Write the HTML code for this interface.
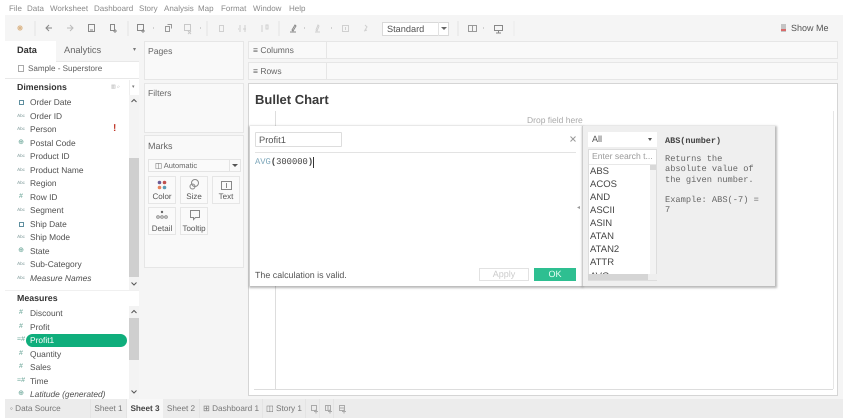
<!DOCTYPE html>
<html><head><meta charset="utf-8">
<style>
html,body{margin:0;padding:0;background:#fff;}
#p{position:relative;width:843px;height:418px;overflow:hidden;background:#fff;font-family:"Liberation Sans",sans-serif;font-size:9px;color:#555;filter:blur(.3px);text-rendering:geometricPrecision;}
#p div,#p span.a,#p svg{position:absolute;}
.t{white-space:nowrap;line-height:12px;}
.card{background:#f9f9f9;border:1px solid #e6e6e6;box-sizing:border-box;}
.f{left:30px;font-size:8.400px;color:#505050;white-space:nowrap;line-height:12px;}
.i{left:15px;font-size:4.500px;color:#7f9a9a;line-height:12px;white-space:nowrap;width:12px;text-align:center;}
.h{font-size:7px;color:#5f9f90;}
.d{left:19px;width:5px;height:5px;border:1px solid #5f8f9f;box-sizing:border-box;}
.m{background:#fafafa;border:1px solid #e6e6e6;box-sizing:border-box;width:28px;height:28px;text-align:center;font-size:8px;color:#555;line-height:11px;}
.fn{left:590px;font-size:9.500px;color:#444;line-height:13px;}
.mono{font-family:"Liberation Mono",monospace;}
.tab{top:399px;height:19px;line-height:19px;font-size:8.200px;color:#777;white-space:nowrap;text-align:center;border-right:1px solid #e4e4e4;box-sizing:border-box;}
</style></head><body><div id="p">

<!-- menu -->
<div class="t" style="left:9px;top:3px;font-size:8px;color:#8a8a8a;">File</div>
<div class="t" style="left:27px;top:3px;font-size:8px;color:#8a8a8a;">Data</div>
<div class="t" style="left:50px;top:3px;font-size:8px;color:#8a8a8a;">Worksheet</div>
<div class="t" style="left:94px;top:3px;font-size:8px;color:#8a8a8a;">Dashboard</div>
<div class="t" style="left:139px;top:3px;font-size:8px;color:#8a8a8a;">Story</div>
<div class="t" style="left:164px;top:3px;font-size:8px;color:#8a8a8a;">Analysis</div>
<div class="t" style="left:198px;top:3px;font-size:8px;color:#8a8a8a;">Map</div>
<div class="t" style="left:221px;top:3px;font-size:8px;color:#8a8a8a;">Format</div>
<div class="t" style="left:253px;top:3px;font-size:8px;color:#8a8a8a;">Window</div>
<div class="t" style="left:289px;top:3px;font-size:8px;color:#8a8a8a;">Help</div>

<!-- toolbar -->
<div style="left:5px;top:15px;width:838px;height:26px;background:#f5f5f5;"></div>
<svg style="left:5px;top:15px" width="510" height="26" viewBox="5 15 510 26" fill="none" stroke="#888" stroke-width="1">
  <g stroke="#dcb88c"><path d="M20 25v6M17 28h6M18 26l4 4M22 26l-4 4"/></g>
  <path d="M35 21v15M128 21v15M207 21v15M279 21v15" stroke="#e4e4e4"/>
  <path d="M52 28h-6m3-3l-3 3 3 3" stroke="#888"/>
  <path d="M67 28h6m-3-3l3 3-3 3" stroke="#bbb"/>
  <path d="M88.500 24.500h6v7h-6zM90 30h3" stroke="#888"/>
  <path d="M110.500 24.500h4v6h-4zM113 31h4M115 29v4" stroke="#888"/>
  <path d="M137.500 24.500h6v6h-6zM141 31h4M143 29v4" stroke="#888"/>
  <path d="M153 28h1M174 28h0M200 28h1" stroke="#aaa"/>
  <path d="M165.500 26.500h4v5h-4zM167.500 24.500h4v4" stroke="#999"/>
  <path d="M184.500 24.500h6v6h-6zM188 31l3 3M191 31l-3 3" stroke="#c8c8c8"/>
  <path d="M219.500 25.500h4v6h-4zM223 27h1" stroke="#d0d0d0"/>
  <path d="M240 25v7M245 25v7M243 29h3M238 29h1M262 25v7M266 25h2v4h-2z" stroke="#d0d0d0"/>
  <path d="M290 32h6M292 30l3-5 1 1-3 5z" stroke="#888"/>
  <path d="M304 28h1M331 28h1" stroke="#aaa"/>
  <path d="M316 30l2-5 1 1-2 5zM315 32h5" stroke="#d0d0d0"/>
  <path d="M342.500 25.500h6v6h-6zM345.500 27v3" stroke="#d0d0d0"/>
  <path d="M365 25l2 2-2 3M364 31l3-1" stroke="#d0d0d0"/>
  <path d="M458 21v15" stroke="#e4e4e4"/>
  <path d="M468.500 25.500h8v6h-8z" stroke="#999"/><path d="M472.500 26v5" stroke="#999"/>
  <path d="M483 28h1" stroke="#aaa"/>
  <path d="M494.500 25.500h8v5h-8zM498.500 30v3M496 33h5" stroke="#888"/>
  <path d="M514 21v15" stroke="#ebebeb"/>
</svg>
<div style="left:382px;top:22px;width:67px;height:14px;background:#fff;border:1px solid #d9d9d9;box-sizing:border-box;"></div>
<div class="t" style="left:387px;top:23px;font-size:9.200px;color:#555;">Standard</div>
<div style="left:438px;top:22px;width:1px;height:14px;background:#e2e2e2;"></div>
<div style="left:441px;top:27px;width:0;height:0;border-left:3px solid transparent;border-right:3px solid transparent;border-top:3px solid #666;"></div>
<div style="left:781px;top:24px;width:5px;height:8px;background:#c4c4c4;"></div>
<div style="left:781px;top:29px;width:5px;height:2px;background:#d86a6a;"></div>
<div class="t" style="left:791px;top:22px;font-size:9px;color:#555;">Show Me</div>

<!-- main bg -->
<div style="left:5px;top:41px;width:838px;height:358px;background:#f5f5f5;"></div>

<!-- data pane -->
<div style="left:5px;top:78px;width:134px;height:321px;background:#fff;"></div>
<div style="left:56px;top:41px;width:83px;height:21px;background:#f5f5f5;border-bottom:1px solid #e8e8e8;box-sizing:border-box;"></div>
<div style="left:5px;top:41px;width:51px;height:21px;background:#fff;"></div>
<div style="left:56px;top:62px;width:83px;height:16px;background:#fff;"></div>
<div style="left:5px;top:62px;width:51px;height:16px;background:#fff;"></div>
<div style="left:5px;top:78px;width:134px;height:1px;background:#e8e8e8;"></div>
<div class="t" style="left:17px;top:44px;font-size:9.200px;font-weight:bold;color:#333;">Data</div>
<div class="t" style="left:64px;top:44px;font-size:9.300px;color:#666;">Analytics</div>
<div class="t" style="left:133px;top:44px;font-size:6px;color:#777;">▾</div>
<div style="left:18px;top:65px;width:6px;height:7px;border:1px solid #aaa;box-sizing:border-box;"></div>
<div class="t" style="left:28px;top:62.500px;font-size:8.100px;color:#606060;">Sample - Superstore</div>
<div class="t" style="left:17px;top:81px;font-size:8.800px;font-weight:bold;color:#333;">Dimensions</div>
<div class="t" style="left:111px;top:81px;font-size:5px;color:#aaa;">▥ ⌕</div>
<div style="left:129px;top:80px;width:10px;height:15px;background:#fff;border-left:1px solid #eee;box-sizing:border-box;"></div>
<div class="t" style="left:132px;top:81px;font-size:5px;color:#777;">▾</div>

<!-- dim scrollbar -->
<div style="left:129px;top:95px;width:10px;height:196px;background:#f3f3f3;"></div>
<div style="left:129px;top:158px;width:10px;height:119px;background:#cfcfcf;"></div>
<svg style="left:129px;top:97px" width="10" height="8" fill="none" stroke="#555" stroke-width="1"><path d="M2.500 5l2.500-2.500 2.500 2.500"/></svg>
<svg style="left:129px;top:280px" width="10" height="8" fill="none" stroke="#555" stroke-width="1"><path d="M2.500 2.500l2.500 2.500 2.500-2.500"/></svg>

<div class="d" style="top:100px;"></div><div class="f" style="top:96px;">Order Date</div>
<div class="i" style="top:110px;">Abc</div><div class="f" style="top:110px;">Order ID</div>
<div class="i" style="top:123px;">Abc</div><div class="f" style="top:123px;">Person</div>
<div class="t" style="left:113px;top:123px;font-size:10px;font-weight:bold;color:#c0392b;">!</div>
<div class="i h" style="top:137px;">⊕</div><div class="f" style="top:137px;">Postal Code</div>
<div class="i" style="top:150px;">Abc</div><div class="f" style="top:150px;">Product ID</div>
<div class="i" style="top:164px;">Abc</div><div class="f" style="top:164px;">Product Name</div>
<div class="i" style="top:177px;">Abc</div><div class="f" style="top:177px;">Region</div>
<div class="i h" style="top:191px;">#</div><div class="f" style="top:191px;">Row ID</div>
<div class="i" style="top:204px;">Abc</div><div class="f" style="top:204px;">Segment</div>
<div class="d" style="top:222px;"></div><div class="f" style="top:218px;">Ship Date</div>
<div class="i" style="top:231px;">Abc</div><div class="f" style="top:231px;">Ship Mode</div>
<div class="i h" style="top:245px;">⊕</div><div class="f" style="top:245px;">State</div>
<div class="i" style="top:258px;">Abc</div><div class="f" style="top:258px;">Sub-Category</div>
<div class="i" style="top:272px;">Abc</div><div class="f" style="top:272px;font-style:italic;">Measure Names</div>

<div style="left:5px;top:290px;width:134px;height:1px;background:#f0f0f0;"></div>
<div class="t" style="left:17px;top:292px;font-size:8.800px;font-weight:bold;color:#333;">Measures</div>

<!-- measure scrollbar -->
<div style="left:129px;top:306px;width:10px;height:93px;background:#f3f3f3;"></div>
<div style="left:129px;top:318px;width:10px;height:42px;background:#cfcfcf;"></div>
<svg style="left:129px;top:308px" width="10" height="8" fill="none" stroke="#555" stroke-width="1"><path d="M2.500 5l2.500-2.500 2.500 2.500"/></svg>
<svg style="left:129px;top:388px" width="10" height="8" fill="none" stroke="#555" stroke-width="1"><path d="M2.500 2.500l2.500 2.500 2.500-2.500"/></svg>

<div style="left:26px;top:334px;width:101px;height:13px;border-radius:7px;background:#0fae7c;"></div>
<div class="i h" style="top:307px;">#</div><div class="f" style="top:307px;">Discount</div>
<div class="i h" style="top:321px;">#</div><div class="f" style="top:321px;">Profit</div>
<div class="i h" style="top:334px;">=#</div><div class="f" style="top:334px;color:#fff;">Profit1</div>
<div class="i h" style="top:348px;">#</div><div class="f" style="top:348px;">Quantity</div>
<div class="i h" style="top:361px;">#</div><div class="f" style="top:361px;">Sales</div>
<div class="i h" style="top:375px;">=#</div><div class="f" style="top:375px;">Time</div>
<div class="i h" style="top:388px;">⊕</div><div class="f" style="top:388px;font-style:italic;">Latitude (generated)</div>

<!-- shelves -->
<div class="card" style="left:144px;top:41px;width:100px;height:39px;"></div>
<div class="t" style="left:148px;top:45px;font-size:8.600px;color:#666;">Pages</div>
<div class="card" style="left:144px;top:83px;width:100px;height:50px;"></div>
<div class="t" style="left:148px;top:87px;font-size:8.600px;color:#666;">Filters</div>
<div class="card" style="left:144px;top:135px;width:100px;height:133px;"></div>
<div class="t" style="left:148px;top:140px;font-size:9px;color:#666;">Marks</div>
<div style="left:148px;top:159px;width:93px;height:13px;background:#fafafa;border:1px solid #e4e4e4;box-sizing:border-box;"></div>
<div class="t" style="left:155px;top:160px;font-size:7.500px;color:#666;">◫ Automatic</div>
<div style="left:229px;top:159px;width:1px;height:13px;background:#e4e4e4;"></div>
<div style="left:232px;top:164px;width:0;height:0;border-left:3px solid transparent;border-right:3px solid transparent;border-top:3px solid #555;"></div>

<div class="m" style="left:148px;top:176px;"></div>
<div class="m" style="left:180px;top:176px;"></div>
<div class="m" style="left:212px;top:176px;"></div>
<div class="m" style="left:148px;top:207px;"></div>
<div class="m" style="left:180px;top:207px;"></div>
<svg style="left:148px;top:176px" width="92" height="60" fill="none" stroke="#888" stroke-width="1">
  <circle cx="11.500" cy="6.500" r="1.800" fill="#6b5b95" stroke="none"/><circle cx="16.500" cy="6.500" r="1.800" fill="#c0504d" stroke="none"/>
  <circle cx="11.500" cy="11.500" r="1.800" fill="#e8825a" stroke="none"/><circle cx="16.500" cy="11.500" r="1.800" fill="#5b9bb5" stroke="none"/>
  <circle cx="47" cy="7" r="3.500"/><circle cx="44.500" cy="10.500" r="2.500"/>
  <path d="M73.500 5.500h10v8h-10zM78.500 7v5"/>
  <circle cx="14" cy="36" r="1.200" fill="#666" stroke="none"/>
  <circle cx="10" cy="41" r="1.300"/><circle cx="14" cy="41" r="1.300"/><circle cx="18" cy="41" r="1.300"/>
  <path d="M42.500 34.500h9v7h-4l-2 2v-2h-3z"/>
</svg>
<div class="t" style="left:148px;top:191px;width:28px;text-align:center;font-size:8px;color:#555;">Color</div>
<div class="t" style="left:180px;top:191px;width:28px;text-align:center;font-size:8px;color:#555;">Size</div>
<div class="t" style="left:212px;top:191px;width:28px;text-align:center;font-size:8px;color:#555;">Text</div>
<div class="t" style="left:148px;top:223px;width:28px;text-align:center;font-size:8px;color:#555;">Detail</div>
<div class="t" style="left:180px;top:223px;width:28px;text-align:center;font-size:8px;color:#555;">Tooltip</div>

<div class="card" style="left:248px;top:41px;width:590px;height:18px;"></div>
<div style="left:326px;top:41px;width:1px;height:18px;background:#e6e6e6;"></div>
<div class="t" style="left:253px;top:44px;font-size:8.500px;color:#666;">≡ Columns</div>
<div class="card" style="left:248px;top:62px;width:590px;height:18px;"></div>
<div style="left:326px;top:62px;width:1px;height:18px;background:#e6e6e6;"></div>
<div class="t" style="left:253px;top:65px;font-size:8.500px;color:#666;">≡ Rows</div>

<!-- view -->
<div style="left:248px;top:83px;width:590px;height:313px;background:#fff;border:1px solid #d5d5d5;box-sizing:border-box;"></div>
<div class="t" style="left:255px;top:92px;font-weight:bold;color:#3a3a3a;line-height:16px;font-size:13px;">Bullet Chart</div>
<div class="t" style="left:527px;top:114px;font-size:8.500px;color:#aaa;">Drop field here</div>
<div style="left:275px;top:111px;width:1px;height:278px;background:#ddd;"></div>
<div style="left:254px;top:389px;width:579px;height:1px;background:#ddd;"></div>
<div style="left:833px;top:111px;width:1px;height:278px;background:#e6e6e6;"></div>

<!-- calc dialog -->
<div style="left:250px;top:126px;width:332px;height:160px;background:#fff;box-shadow:0 1px 2px 1px rgba(0,0,0,.28);"></div>
<div style="left:255px;top:132px;width:87px;height:15px;background:#fff;border:1px solid #ddd;border-radius:1px;box-sizing:border-box;"></div>
<div class="t" style="left:259px;top:134px;font-size:9.300px;color:#555;">Profit1</div>
<svg style="left:569px;top:135px" width="8" height="8" fill="none" stroke="#999" stroke-width="1"><path d="M1.500 1.500l5 5M6.500 1.500l-5 5"/></svg>
<div style="left:255px;top:152px;width:321px;height:1px;background:#e3e3e3;"></div>
<div class="t mono" style="left:255px;top:156px;font-size:8.800px;color:#444;line-height:13px;"><span style="color:#7fa8bb;">AVG</span><b>(</b>300000<b>)</b></div>
<div style="left:313px;top:157px;width:1px;height:11px;background:#333;"></div>
<div class="t" style="left:255px;top:269px;font-size:8.900px;color:#555;">The calculation is valid.</div>
<div style="left:479px;top:268px;width:50px;height:13px;background:#fff;border:1px solid #e2e2e2;box-sizing:border-box;text-align:center;font-size:9px;line-height:11px;color:#ccc;">Apply</div>
<div style="left:534px;top:268px;width:42px;height:13px;background:#2ebf91;text-align:center;font-size:9px;line-height:13px;color:#e8fff5;">OK</div>

<!-- function panel -->
<div style="left:582px;top:126px;width:193px;height:160px;background:#efefef;box-shadow:1px 1px 2px 1px rgba(0,0,0,.28);border-left:1px solid #ccc;box-sizing:border-box;"></div>
<div class="t" style="left:577px;top:202px;font-size:6px;color:#999;">◂</div>
<div style="left:588px;top:132px;width:69px;height:15px;background:#fff;"></div>
<div class="t" style="left:592px;top:133px;font-size:9px;color:#555;">All</div>
<div style="left:648px;top:138px;width:0;height:0;border-left:2.500px solid transparent;border-right:2.500px solid transparent;border-top:3px solid #555;"></div>
<div style="left:588px;top:149px;width:69px;height:132px;background:#fff;border:1px solid #ddd;box-sizing:border-box;"></div>
<div style="left:589px;top:164px;width:67px;height:1px;background:#e8e8e8;"></div>
<div class="t" style="left:592px;top:150px;font-size:8.600px;color:#999;">Enter search t...</div>
<div style="left:650px;top:165px;width:6px;height:115px;background:#f3f3f3;"></div>
<div style="left:650px;top:165px;width:6px;height:5px;background:#d8d8d8;"></div>
<div class="fn" style="top:165px;">ABS</div>
<div class="fn" style="top:178px;">ACOS</div>
<div class="fn" style="top:191px;">AND</div>
<div class="fn" style="top:204px;">ASCII</div>
<div class="fn" style="top:217px;">ASIN</div>
<div class="fn" style="top:230px;">ATAN</div>
<div class="fn" style="top:243px;">ATAN2</div>
<div class="fn" style="top:256px;">ATTR</div>
<div style="left:589px;top:271px;width:60px;height:9px;overflow:hidden;"><div class="fn" style="left:1px;top:-1px;">AVG</div></div>
<div style="left:588px;top:274px;width:60px;height:6px;background:#d5d5d5;"></div>
<div style="left:648px;top:274px;width:9px;height:6px;background:#eee;"></div>
<div class="t mono" style="left:665px;top:135px;font-size:8.500px;font-weight:bold;color:#444;">ABS(number)</div>
<div class="t mono" style="left:665px;top:154px;font-size:8.700px;line-height:10.300px;color:#666;white-space:pre;">Returns the
absolute value of
the given number.

Example: ABS(-7) =
7</div>

<!-- tabs -->
<div style="left:5px;top:399px;width:838px;height:19px;background:#ececec;"></div>
<div class="tab" style="left:5px;width:86px;text-align:left;padding-left:5px;">◦ Data Source</div>
<div class="tab" style="left:91px;width:36px;">Sheet 1</div>
<div class="tab" style="left:127px;width:36px;background:#f8f8f8;color:#444;font-weight:bold;border:none;">Sheet 3</div>
<div class="tab" style="left:163px;width:37px;">Sheet 2</div>
<div class="tab" style="left:200px;width:63px;">⊞ Dashboard 1</div>
<div class="tab" style="left:263px;width:43px;">◫ Story 1</div>
<div class="tab" style="left:306px;width:14px;"></div>
<div class="tab" style="left:320px;width:14px;"></div>
<div class="tab" style="left:334px;width:14px;border:none;"></div>
<svg style="left:306px;top:399px" width="42" height="19" fill="none" stroke="#aaa" stroke-width="1"><path d="M5.500 6.500h5v5h-5zM8 12.500h4M10 10.500v4M19.500 6.500h5v5h-5zM22 6.500v5M22 12.500h4M24 10.500v4M33.500 6.500h5v5h-5zM33.500 9h5M36 12.500h4M38 10.500v4"/></svg>

</div></body></html>
